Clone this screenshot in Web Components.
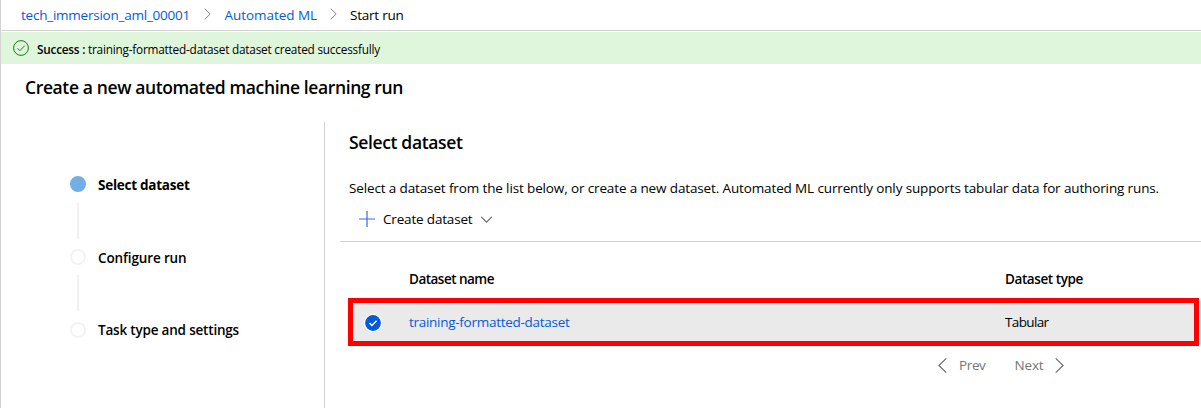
<!DOCTYPE html>
<html lang="en">
<head>
<meta charset="utf-8">
<title>Create a new automated machine learning run</title>
<style>
body { margin: 0; background: #fff; color: #000; font: 13.5px/20px "Open Sans", "Noto Sans", sans-serif; overflow: hidden; }
</style>
</head>
<body>
<aml-page></aml-page>
<script>
function define(name, html, Base = HTMLElement) {
  const template = document.createElement('template');
  template.innerHTML = html;
  customElements.define(name, class extends Base {
    constructor() {
      super();
      this.attachShadow({ mode: 'open' }).append(template.content.cloneNode(true));
    }
  });
}

/* A single line of text, tracked so that it spans the width in its "w" attribute. */
class TrackedText extends HTMLElement {
  connectedCallback() {
    const span = this.shadowRoot.querySelector('span');
    const target = parseFloat(this.getAttribute('w'));
    const count = this.textContent.length;
    const natural = span.getBoundingClientRect().width;
    span.style.letterSpacing = ((target - natural) / count).toFixed(4) + 'px';
  }
}
define('ui-text', `<style>
:host { display: inline-block; white-space: pre; width: max-content; flex: none; }
:host([semi]) { font-weight: 600; }
:host([bold]) { font-weight: 700; }
:host([link]) { color: #015cda; }
:host([title]) { font-size: 17.5px; line-height: 24px; font-weight: 600; }
:host([small]) { font-size: 11.8px; line-height: 16px; }
span { display: inline-block; }
</style><span><slot></slot></span>`, TrackedText);

define('ui-chevron', `<style>
:host { display: block; flex: none; width: 8px; height: 14px; color: #666; }
:host([large]) { width: 9px; height: 17px; }
:host([down]) { width: 13px; height: 7px; }
:host([left]) { transform: scaleX(-1); }
svg { display: none; width: 100%; height: 100%; fill: none; stroke: currentColor; }
:host(:not([down])) .r, :host([down]) .d { display: block; }
</style>
<svg class="r" viewBox="0 0 10 18"><path d="M.8 1 9 9 .8 17" stroke-width="1.2"/></svg>
<svg class="d" viewBox="0 0 14 8"><path d="M1 1 7 7 13 1" stroke-width="1.3"/></svg>`);

define('aml-breadcrumb', `<style>
:host { display: flex; align-items: center; height: 30px; padding-left: 20px; border-bottom: 1px solid #d2d2d2; }
ui-chevron { margin: 0 13.5px 2px 14px; height: 12px; width: 7px; }
ui-chevron + ui-text + ui-chevron { margin-left: 13px; margin-right: 13px; }
</style>
<ui-text link w="169">tech_immersion_aml_00001</ui-text><ui-chevron></ui-chevron>
<ui-text link w="92.5">Automated ML</ui-text><ui-chevron></ui-chevron>
<ui-text w="53.5">Start run</ui-text>`);

define('aml-message', `<style>
:host { display: flex; align-items: center; height: 32px; margin-top: 1px; padding-left: 12px; background: #dff6dd; }
svg { width: 16px; height: 16px; margin-right: 8px; fill: none; stroke: #107c10; flex: none; }
ui-text { margin-top: 1px; }
</style>
<svg viewBox="0 0 16 16"><circle cx="8" cy="8" r="7.4"/><path d="m4.5 8.3 2.4 2.4 4.8-5"/></svg>
<ui-text small semi w="51">Success : </ui-text><ui-text small w="292">training-formatted-dataset dataset created successfully</ui-text>`);

define('aml-step', `<style>
:host { display: grid; grid-template-columns: 16px auto; column-gap: 12px; justify-content: start; align-items: start; }
i { box-sizing: border-box; width: 16px; height: 16px; border: 2px solid #f3f3f3; border-radius: 50%; }
:host([current]) i { background: #71afe5; border-color: #71afe5; }
b { display: block; width: 2px; height: 36px; margin: 11px 7px 10px; background: #f1f1f1; }
:host(:not([current])) b { margin-top: 10px; margin-bottom: 11px; }
:host([last]) b { display: none; }
slot { display: block; height: 16px; margin-top: -1px; }
:host([last]) slot { margin-top: -2px; }
</style><i></i><slot></slot><b></b>`);

define('aml-steps', `<style>
:host { display: block; box-sizing: border-box; width: 324px; padding: 54px 0 0 69px; border-right: 1px solid #d2d2d2; }
</style>
<aml-step current><ui-text bold w="91.5">Select dataset</ui-text></aml-step>
<aml-step><ui-text semi w="88.5">Configure run</ui-text></aml-step>
<aml-step last><ui-text semi w="141">Task type and settings</ui-text></aml-step>`);

define('aml-command', `<style>
:host { display: flex; align-items: center; box-sizing: border-box; height: 43px; margin-left: -9px; padding: 0 0 2px 19px; border-bottom: 1px solid #d2d2d2; }
svg { width: 16px; height: 16px; margin-right: 8px; stroke: #3c6bdc; stroke-width: 1.2; }
ui-chevron { margin-left: 7.5px; }
</style>
<svg viewBox="0 0 16 16"><path d="M0 8H16M8 0V16"/></svg><ui-text w="89.5">Create dataset</ui-text><ui-chevron down></ui-chevron>`);

define('aml-table', `<style>
:host { display: block; }
.head, .row { display: grid; grid-template-columns: 60px 596px auto; align-items: center; }
.head { box-sizing: border-box; height: 59px; padding-top: 14px; }
.row { height: 43px; background: #eaeaea; position: relative; }
.row ui-text { margin-top: -2px; }
.mark { position: absolute; inset: -3px 2px -2px -1px; border: 5px solid #f00; }
svg { width: 18px; height: 18px; margin: 0 0 0 15px; }
</style>
<div class="head"><span></span><ui-text semi w="85">Dataset name</ui-text><ui-text semi w="78">Dataset type</ui-text></div>
<div class="row">
<svg viewBox="0 0 18 18"><circle cx="9" cy="9" r="9" fill="#fff"/><circle cx="9" cy="9" r="7.9" fill="#015cda"/><path d="m5.5 9 2.4 2.4 4.7-4.7" fill="none" stroke="#fff" stroke-width="1.4"/></svg>
<ui-text link w="160.5">training-formatted-dataset</ui-text><ui-text w="43.5">Tabular</ui-text><div class="mark"></div></div>`);

define('aml-pager', `<style>
:host { display: flex; align-items: center; height: 20px; margin: 11px 0 0 589px; color: #767676; }
.prev { margin: 0 29px 0 12px; }
.next { margin-right: 11.5px; }
</style>
<ui-chevron large left></ui-chevron><ui-text class="prev" w="26.5">Prev</ui-text><ui-text class="next" w="29">Next</ui-text><ui-chevron large></ui-chevron>`);

define('aml-dataset', `<style>
:host { display: block; flex: 1; padding: 8px 0 0 24px; }
h2 { margin: 0 0 24px; height: 24px; }
p { margin: 0; height: 21px; }
</style>
<h2><ui-text title w="113.5">Select dataset</ui-text></h2>
<p><ui-text w="810">Select a dataset from the list below, or create a new dataset. Automated ML currently only supports tabular data for authoring runs.</ui-text></p>
<aml-command></aml-command><aml-table></aml-table><aml-pager></aml-pager>`);

define('aml-page', `<style>
:host { display: flex; flex-direction: column; box-sizing: border-box; height: 408px; border-left: 1px solid #d2d2d2; }
h1 { box-sizing: border-box; margin: 0; height: 58px; padding: 10px 0 0 24px; }
main { display: flex; flex: 1; }
</style>
<aml-breadcrumb></aml-breadcrumb><aml-message></aml-message>
<h1><ui-text title w="378">Create a new automated machine learning run</ui-text></h1>
<main><aml-steps></aml-steps><aml-dataset></aml-dataset></main>`);
</script>
</body>
</html>
